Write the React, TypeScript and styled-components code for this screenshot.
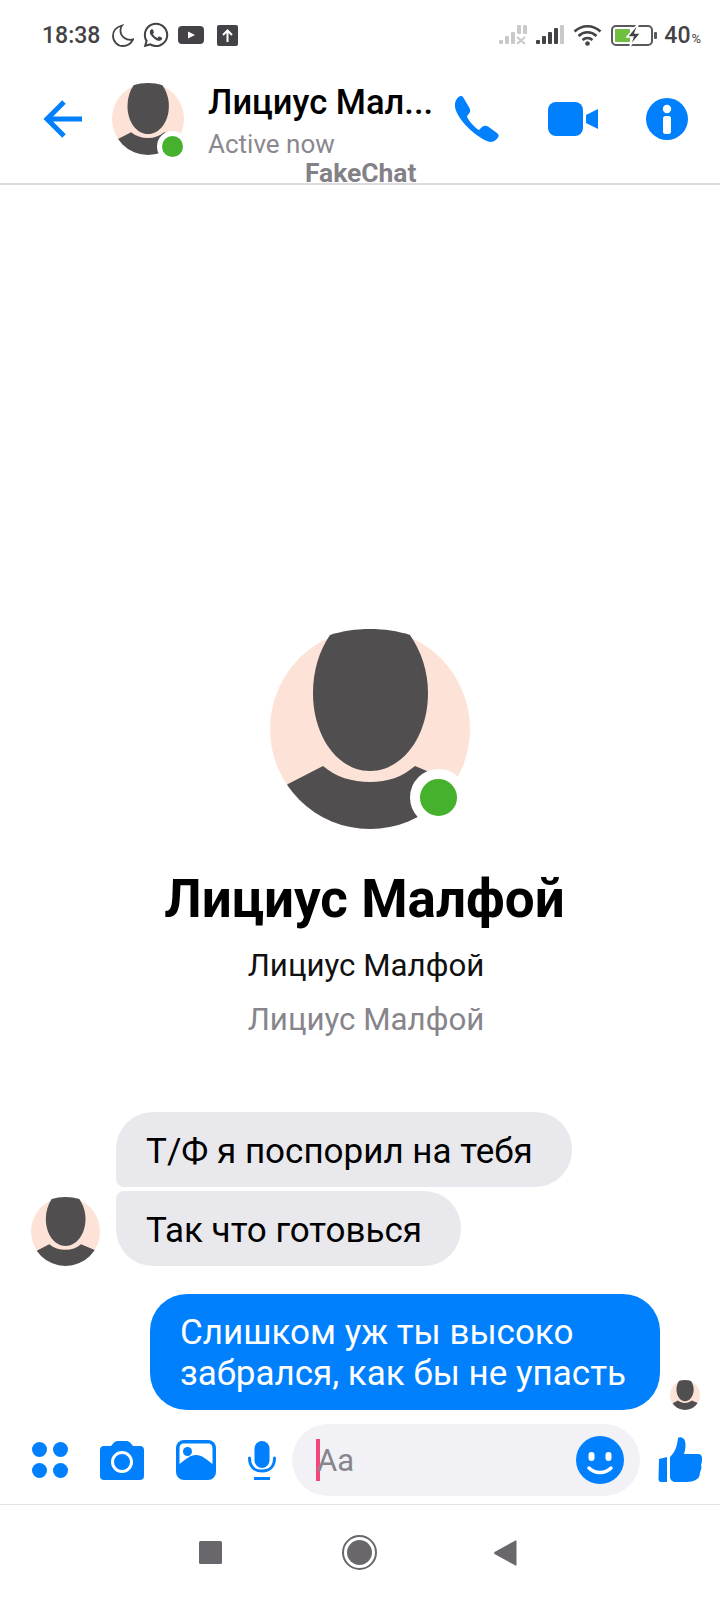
import styled, { createGlobalStyle } from "styled-components";
import { FaWhatsapp } from "react-icons/fa";

const BLUE = "#0180fe";

const GlobalStyle = createGlobalStyle`
  html, body {
    margin: 0;
    padding: 0;
    background: #fff;
  }
  body {
    font-family: Roboto, "Liberation Sans", sans-serif;
  }
`;

const Page = styled.div`
  width: 720px;
  height: 1600px;
  display: flex;
  flex-direction: column;
  background: #fff;
  overflow: hidden;
`;

const StatusBar = styled.div`
  height: 70px;
  flex: none;
  display: flex;
  align-items: center;
  padding: 0 19px 0 42px;
  color: #444246;
`;

const Time = styled.span`
  font-size: 23px;
  font-weight: 500;
  margin-right: 12px;
`;

const StatusIcons = styled.div`
  display: flex;
  align-items: center;
  gap: 8px;
`;

const SystemIcons = styled.div`
  display: flex;
  align-items: center;
  gap: 9px;
  margin-left: auto;
`;

const Battery = styled.span`
  font-size: 23px;
  font-weight: 500;
  margin-left: -2px;
  small {
    font-size: 13px;
    font-weight: 400;
    margin-left: 1px;
  }
`;

const Header = styled.header`
  position: relative;
  height: 115px;
  flex: none;
  display: flex;
  align-items: center;
  padding: 0 32px 16px 43px;
  box-sizing: border-box;
  border-bottom: 2px solid #dcdce0;
`;

const HeaderAvatar = styled.div`
  position: relative;
  width: 72px;
  height: 72px;
  margin: 0 24px 0 30px;
  flex: none;
`;

const OnlineDot = styled.span<{ $size: number; $ring: number; $right: number; $bottom: number }>`
  position: absolute;
  right: ${(p) => p.$right}px;
  bottom: ${(p) => p.$bottom}px;
  width: ${(p) => p.$size}px;
  height: ${(p) => p.$size}px;
  border: ${(p) => p.$ring}px solid #fff;
  border-radius: 50%;
  background: #45b12c;
`;

const HeaderText = styled.div`
  width: 245px;
  flex: none;
  padding-top: 5px;
`;

const HeaderName = styled.div`
  font-size: 34.5px;
  line-height: 38px;
  font-weight: 500;
  color: #000;
  white-space: nowrap;
`;

const HeaderStatus = styled.div`
  font-size: 26px;
  line-height: 30px;
  margin-top: 8px;
  color: #8a888e;
`;

const Watermark = styled.div`
  position: absolute;
  left: 305px;
  top: 89px;
  font-size: 26.4px;
  line-height: 28px;
  font-weight: 700;
  color: #838187;
`;

const HeaderActions = styled.div`
  display: flex;
  align-items: center;
  margin-left: auto;
  gap: 48px;
`;

const Main = styled.main`
  flex: 1;
  display: flex;
  flex-direction: column;
  justify-content: flex-end;
`;

const Profile = styled.section`
  display: flex;
  flex-direction: column;
  align-items: center;
  padding-left: 9px;
  margin-bottom: 74px;
`;

const ProfileAvatar = styled.div`
  position: relative;
  width: 200px;
  height: 200px;
  margin: 0 0 38px 11px;
`;

const ProfileName = styled.h1`
  margin: 0;
  font-size: 53px;
  line-height: 64px;
  font-weight: 700;
  color: #000;
`;

const ProfileLine = styled.div<{ $muted?: boolean }>`
  font-size: 31.3px;
  line-height: 36px;
  margin-top: ${(p) => (p.$muted ? 18 : 17)}px;
  margin-left: 3px;
  color: ${(p) => (p.$muted ? "#87858b" : "#111")};
`;

const Incoming = styled.div`
  display: flex;
  align-items: flex-end;
  gap: 16px;
  padding-left: 31px;
  margin-bottom: 28px;
`;

const BubbleStack = styled.div`
  display: flex;
  flex-direction: column;
  align-items: flex-start;
  gap: 4px;
`;

const Bubble = styled.div<{ $corner?: string }>`
  padding: 21px 39px 16px 30px;
  font-size: 35px;
  line-height: 38px;
  color: #000;
  background: #e9e8ec;
  border-radius: ${(p) => p.$corner ?? "37px"};
`;

const Outgoing = styled.div`
  display: flex;
  justify-content: flex-end;
  align-items: flex-end;
  gap: 10px;
  padding-right: 20px;
  margin-bottom: 6px;
`;

const OwnBubble = styled.div`
  padding: 18px 34px 16px 30px;
  font-size: 35px;
  line-height: 41px;
  color: #fff;
  background: ${BLUE};
  border-radius: 37px;
`;

const TinyAvatar = styled.div`
  width: 30px;
  height: 30px;
  flex: none;
`;

const Composer = styled.div`
  height: 89px;
  flex: none;
  display: flex;
  align-items: center;
  gap: 16px;
  padding: 0 18px 0 32px;
  box-sizing: border-box;
  border-bottom: 1px solid #e2e2e5;
`;

const Tools = styled.div`
  display: flex;
  align-items: center;
  gap: 32px;
`;

const InputPill = styled.div`
  width: 348px;
  height: 72px;
  flex: none;
  display: flex;
  align-items: center;
  padding: 0 16px 0 24px;
  box-sizing: border-box;
  border-radius: 36px;
  background: #f2f2f6;
`;

const Caret = styled.span`
  width: 4px;
  height: 42px;
  background: #f0487c;
`;

const Placeholder = styled.span`
  font-size: 31px;
  color: #87858b;
  margin-left: -3px;
`;

const Smile = styled.span`
  margin-left: auto;
  display: flex;
`;

const Like = styled.span`
  display: flex;
  margin-left: 2px;
`;

const NavBar = styled.nav`
  height: 95px;
  flex: none;
  display: flex;
  align-items: center;
  justify-content: center;
  gap: 117px;
  padding-right: 4px;
`;

let clipCount = 0;

function Person({ size }: { size: number }) {
  const id = `person-clip-${clipCount++}`;
  return (
    <svg width={size} height={size} viewBox="0 0 200 200" style={{ display: "block", flex: "none" }}>
      <defs>
        <clipPath id={id}>
          <circle cx="100" cy="100" r="100" />
        </clipPath>
      </defs>
      <circle cx="100" cy="100" r="100" fill="#fde3d7" />
      <path
        clipPath={`url(#${id})`}
        d="M0 200V172L18 155L53 137C66 148 82 153 100 153C118 153 132 148 145 137L200 160V200Z"
        fill="#514e50"
      />
      <path
        d="M60 6C72 2 86 0 100 0C114 0 128 2 140 6C151 22 158 42 158 64C158 108 132 142 100 142C68 142 43 108 43 64C43 42 49 22 60 6Z"
        fill="#514e50"
      />
    </svg>
  );
}

function SignalBars({ muted, cross }: { muted?: boolean; cross?: boolean }) {
  const bars = [
    { x: 0, h: 4 },
    { x: 6, h: 8 },
    { x: 12, h: 12 },
    { x: 18, h: cross ? 19 : 16 },
    { x: 24, h: 19 },
  ];
  return (
    <svg width="28" height="20" viewBox="0 0 28 20">
      {bars.map((b, i) => (
        <rect
          key={b.x}
          x={b.x}
          y={cross && i >= 3 ? 0 : 19 - b.h}
          width="4"
          height={cross && i >= 3 ? 9 : b.h}
          rx="1"
          fill={muted || i === 4 ? "#c9c9cc" : "#444246"}
        />
      ))}
      {cross && <path d="M18 12l8 7M26 12l-8 7" stroke="#c9c9cc" strokeWidth="2" />}
    </svg>
  );
}

export default function App() {
  return (
    <Page>
      <GlobalStyle />
      <StatusBar>
        <Time>18:38</Time>
        <StatusIcons>
          <svg width="22" height="23" viewBox="0 0 22 23">
            <path
              d="M10 1.500C4.500 3 1 7 1 12c0 5.500 4.500 10 10 10 4.500 0 8-2.500 10-6.500-6.500 1.500-13-3-12.500-9.500 0-1.500.5-3.200 1.500-4.500z"
              fill="none"
              stroke="#444246"
              strokeWidth="1.8"
            />
          </svg>
          <FaWhatsapp size={28} color="#444246" />
          <svg width="26" height="18" viewBox="0 0 26 18">
            <rect width="26" height="18" rx="4" fill="#444246" />
            <path d="M10 5.500l7 3.500-7 3.500z" fill="#fff" />
          </svg>
          <svg width="26" height="21" viewBox="0 0 26 21">
            <rect x="5" width="21" height="21" rx="2" fill="#444246" />
            <path d="M15.500 17V6M11 10l4.500-4.500L20 10" fill="none" stroke="#fff" strokeWidth="2" />
          </svg>
        </StatusIcons>
        <SystemIcons>
          <SignalBars muted cross />
          <SignalBars />
          <svg width="29" height="22" viewBox="0 0 29 22">
            <path
              d="M1.500 7.500C9 .5 20 .5 27.500 7.500M5.500 12C11 7 18 7 23.500 12M9.500 16c3-2.500 7-2.500 10 0"
              fill="none"
              stroke="#444246"
              strokeWidth="2.600"
            />
            <circle cx="14.500" cy="19.500" r="2.300" fill="#444246" />
          </svg>
          <svg width="46" height="21" viewBox="0 0 46 21">
            <rect x="1" y="1" width="40" height="19" rx="4" fill="none" stroke="#5a585c" strokeWidth="2" />
            <rect x="4" y="4" width="15" height="13" rx="1" fill="#6fbe3f" />
            <rect x="43" y="7" width="3" height="7" rx="1" fill="#5a585c" />
            <path d="M26 0L16 12h6l-3 9 11-13h-6l3-8z" fill="#444246" stroke="#fff" strokeWidth="1.500" />
          </svg>
          <Battery>
            40<small>%</small>
          </Battery>
        </SystemIcons>
      </StatusBar>

      <Header>
        <svg width="39" height="38" viewBox="0 0 39 38" style={{ flex: "none" }}>
          <path d="M39 19H4M21 2L4 19l17 17" fill="none" stroke={BLUE} strokeWidth="5" />
        </svg>
        <HeaderAvatar>
          <Person size={72} />
          <OnlineDot $size={21} $ring={5.5} $right={-4} $bottom={-7} />
        </HeaderAvatar>
        <HeaderText>
          <HeaderName>Лициус Мал...</HeaderName>
          <HeaderStatus>Active now</HeaderStatus>
        </HeaderText>
        <HeaderActions>
          <svg width="46" height="48" viewBox="0 0 46 48">
            <path
              d="M4 2.500C6 .5 8 .5 9 2L15.500 13C16.500 15 16.500 17 15 18.500L13 21C13 24 21 33 25 35L28 32C30 30.500 32 30.500 34 31.500L43 38C45 39.500 45 41 44 42.500C42 45.500 39 47 36 47C24 44 3 25 1 12C.5 8 1.500 5 4 2.500Z"
              fill={BLUE}
            />
          </svg>
          <svg width="50" height="34" viewBox="0 0 50 34">
            <rect width="35" height="34" rx="8" fill={BLUE} />
            <path d="M38 13L50 7V27L38 21Z" fill={BLUE} />
          </svg>
          <svg width="42" height="42" viewBox="0 0 42 42">
            <circle cx="21" cy="21" r="21" fill={BLUE} />
            <circle cx="21" cy="11" r="4.200" fill="#fff" />
            <rect x="17" y="18" width="8" height="18" rx="2.500" fill="#fff" />
          </svg>
        </HeaderActions>
        <Watermark>FakeChat</Watermark>
      </Header>

      <Main>
        <Profile>
          <ProfileAvatar>
            <Person size={200} />
            <OnlineDot $size={37} $ring={10} $right={3.5} $bottom={3.5} />
          </ProfileAvatar>
          <ProfileName>Лициус Малфой</ProfileName>
          <ProfileLine>Лициус Малфой</ProfileLine>
          <ProfileLine $muted>Лициус Малфой</ProfileLine>
        </Profile>

        <Incoming>
          <Person size={69} />
          <BubbleStack>
            <Bubble $corner="37px 37px 37px 8px">Т/Ф я поспорил на тебя</Bubble>
            <Bubble $corner="8px 37px 37px 37px">Так что готовься</Bubble>
          </BubbleStack>
        </Incoming>

        <Outgoing>
          <OwnBubble>
            Слишком уж ты высоко
            <br />
            забрался, как бы не упасть
          </OwnBubble>
          <TinyAvatar>
            <Person size={30} />
          </TinyAvatar>
        </Outgoing>
      </Main>

      <Composer>
        <Tools>
          <svg width="36" height="36" viewBox="0 0 36 36">
            <circle cx="7.500" cy="7.500" r="7.500" fill={BLUE} />
            <circle cx="28.500" cy="7.500" r="7.500" fill={BLUE} />
            <circle cx="7.500" cy="28.500" r="7.500" fill={BLUE} />
            <circle cx="28.500" cy="28.500" r="7.500" fill={BLUE} />
          </svg>
          <svg width="44" height="39" viewBox="0 0 44 39">
            <path
              d="M4 5H11L14 1.500C15 .5 16 0 17 0H27C28 0 29 .5 30 1.500L33 5H40C42.500 5 44 6.500 44 9V35C44 37.500 42.500 39 40 39H4C1.500 39 0 37.500 0 35V9C0 6.500 1.500 5 4 5Z"
              fill={BLUE}
            />
            <circle cx="22" cy="21" r="9.500" fill="none" stroke="#fff" strokeWidth="3" />
          </svg>
          <svg width="40" height="40" viewBox="0 0 40 40">
            <rect width="40" height="40" rx="8" fill={BLUE} />
            <path d="M3.500 9C3.500 5 5 3.500 8 3.500H32C35 3.500 36.500 5 36.500 9V24C30 19 26 15 20 15C14 15 10 19 3.500 24Z" fill="#fff" />
            <circle cx="11.500" cy="11.500" r="4.500" fill={BLUE} />
          </svg>
          <svg width="28" height="39" viewBox="0 0 28 39">
            <rect x="6.500" y="0" width="15" height="27" rx="7.500" fill={BLUE} />
            <path d="M1.500 17C1.500 25 6 30 14 30C22 30 26.500 25 26.500 17" fill="none" stroke={BLUE} strokeWidth="3" strokeLinecap="round" />
            <rect x="6" y="36" width="16" height="3" fill={BLUE} />
          </svg>
        </Tools>
        <InputPill>
          <Caret />
          <Placeholder>Aa</Placeholder>
          <Smile>
            <svg width="48" height="48" viewBox="0 0 48 48">
              <circle cx="24" cy="24" r="24" fill={BLUE} />
              <rect x="12.500" y="16" width="6" height="9" rx="3" fill="#fff" />
              <rect x="29.500" y="16" width="6" height="9" rx="3" fill="#fff" />
              <path d="M13 32C19 38 29 38 35 32" fill="none" stroke="#fff" strokeWidth="3.500" strokeLinecap="round" />
            </svg>
          </Smile>
        </InputPill>
        <Like>
          <svg width="44" height="46" viewBox="0 0 44 46">
            <path d="M1 22L9 20V45H3C1.500 45 .5 44 .5 42Z" fill={BLUE} />
            <path
              d="M12 20C17 15 19 10 20 1C21 0 24 0 26 2C28 5 28 11 26 17H40C43 17 44 19 44 21C44 23 44 26 43 28C44 30 43 34 42 35C42 38 41 41 39 42C37 44 33 45 28 45H18C15 45 12 43 12 40Z"
              fill={BLUE}
            />
          </svg>
        </Like>
      </Composer>

      <NavBar>
        <svg width="26" height="23" viewBox="0 0 26 23">
          <rect width="23" height="23" rx="1.500" fill="#69676b" />
        </svg>
        <svg width="35" height="35" viewBox="0 0 35 35">
          <circle cx="17.500" cy="17.500" r="16.500" fill="none" stroke="#69676b" strokeWidth="2" />
          <circle cx="17.500" cy="17.500" r="12.500" fill="#69676b" />
        </svg>
        <svg width="23" height="26" viewBox="0 0 23 26">
          <path d="M22.500 1V25C22.500 25.500 22 26 21.500 25.500L.5 14C0 13.500 0 12.500 .5 12L21.500 .5C22 0 22.500 .5 22.500 1Z" fill="#69676b" />
        </svg>
      </NavBar>
    </Page>
  );
}
